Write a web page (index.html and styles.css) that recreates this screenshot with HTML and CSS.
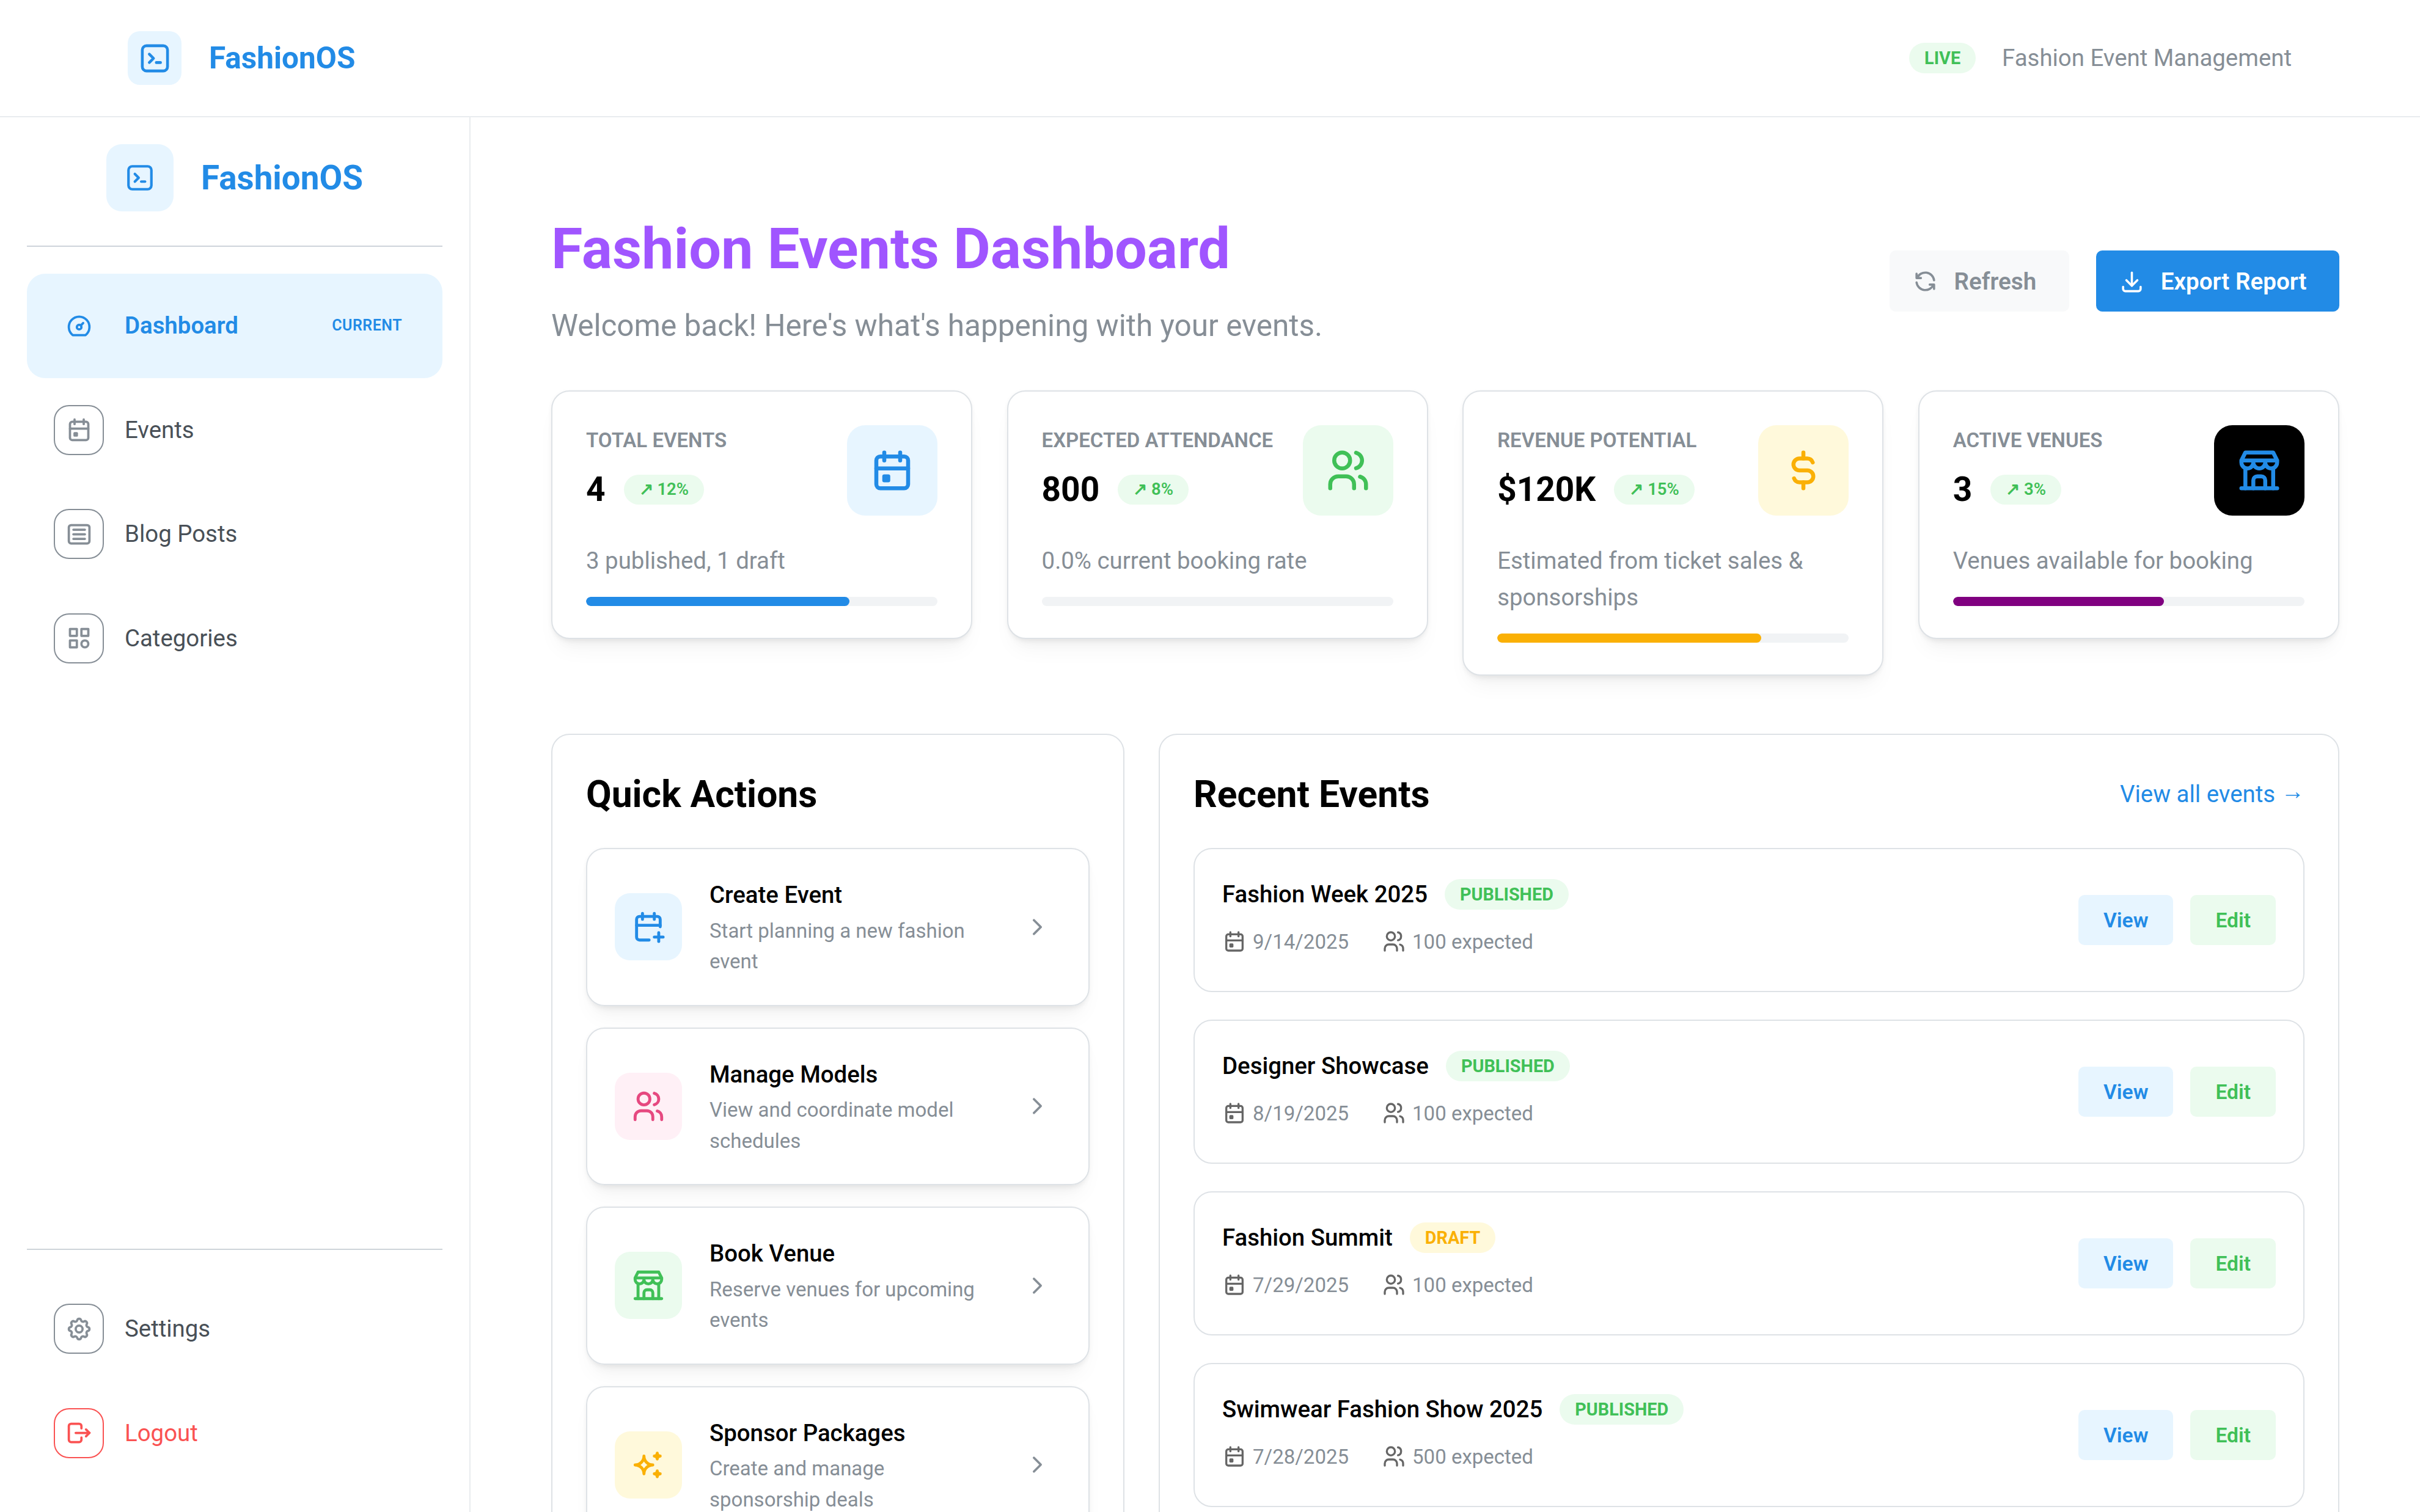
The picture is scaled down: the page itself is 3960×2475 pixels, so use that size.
FILE: index.html
```html
<!DOCTYPE html>
<html lang="en">
<head>
    <meta charset="UTF-8">
    <meta name="viewport" content="width=device-width, initial-scale=1.0">
    <title>FashionOS</title>
    <link rel="stylesheet" href="styles.css">
</head>
<body>
    <!-- icon sprite -->
    <svg class="sprite" xmlns="http://www.w3.org/2000/svg">
        <symbol id="i-terminal" viewBox="0 0 24 24"><rect x="3" y="3" width="18" height="18" rx="3"/><path d="M8 9l3 3l-3 3"/><path d="M13 15h3"/></symbol>
        <symbol id="i-dashboard" viewBox="0 0 24 24"><path d="M12 13m-2 0a2 2 0 1 0 4 0a2 2 0 1 0 -4 0"/><path d="M13.45 11.55l2.05 -2.05"/><path d="M6.4 20a9 9 0 1 1 11.2 0z"/></symbol>
        <symbol id="i-calendar" viewBox="0 0 24 24"><path d="M4 5m0 2a2 2 0 0 1 2 -2h12a2 2 0 0 1 2 2v12a2 2 0 0 1 -2 2h-12a2 2 0 0 1 -2 -2z"/><path d="M16 3v4"/><path d="M8 3v4"/><path d="M4 11h16"/><path d="M8 15h2v2h-2z"/></symbol>
        <symbol id="i-article" viewBox="0 0 24 24"><path d="M3 4m0 2a2 2 0 0 1 2 -2h14a2 2 0 0 1 2 2v12a2 2 0 0 1 -2 2h-14a2 2 0 0 1 -2 -2z"/><path d="M7 8h10"/><path d="M7 12h10"/><path d="M7 16h10"/></symbol>
        <symbol id="i-category" viewBox="0 0 24 24"><path d="M4 4h6v6h-6z"/><path d="M14 4h6v6h-6z"/><path d="M4 14h6v6h-6z"/><path d="M17 17m-3 0a3 3 0 1 0 6 0a3 3 0 1 0 -6 0"/></symbol>
        <symbol id="i-settings" viewBox="0 0 24 24"><path d="M10.325 4.317c.426 -1.756 2.924 -1.756 3.35 0a1.724 1.724 0 0 0 2.573 1.066c1.543 -.94 3.31 .826 2.37 2.37a1.724 1.724 0 0 0 1.065 2.572c1.756 .426 1.756 2.924 0 3.35a1.724 1.724 0 0 0 -1.066 2.573c.94 1.543 -.826 3.31 -2.37 2.37a1.724 1.724 0 0 0 -2.572 1.065c-.426 1.756 -2.924 1.756 -3.35 0a1.724 1.724 0 0 0 -2.573 -1.066c-1.543 .94 -3.31 -.826 -2.37 -2.37a1.724 1.724 0 0 0 -1.065 -2.572c-1.756 -.426 -1.756 -2.924 0 -3.35a1.724 1.724 0 0 0 1.066 -2.573c-.94 -1.543 .826 -3.31 2.37 -2.37c1 .608 2.296 .07 2.572 -1.065z"/><path d="M9 12a3 3 0 1 0 6 0a3 3 0 0 0 -6 0"/></symbol>
        <symbol id="i-logout" viewBox="0 0 24 24"><path d="M14 8v-2a2 2 0 0 0 -2 -2h-7a2 2 0 0 0 -2 2v12a2 2 0 0 0 2 2h7a2 2 0 0 0 2 -2v-2"/><path d="M9 12h12l-3 -3"/><path d="M18 15l3 -3"/></symbol>
        <symbol id="i-users" viewBox="0 0 24 24"><path d="M9 7m-4 0a4 4 0 1 0 8 0a4 4 0 1 0 -8 0"/><path d="M3 21v-2a4 4 0 0 1 4 -4h4a4 4 0 0 1 4 4v2"/><path d="M16 3.13a4 4 0 0 1 0 7.75"/><path d="M21 21v-2a4 4 0 0 0 -3 -3.85"/></symbol>
        <symbol id="i-dollar" viewBox="0 0 24 24"><path d="M16.7 8a3 3 0 0 0 -2.7 -2h-4a3 3 0 0 0 0 6h4a3 3 0 0 1 0 6h-4a3 3 0 0 1 -2.7 -2"/><path d="M12 3v3m0 12v3"/></symbol>
        <symbol id="i-store" viewBox="0 0 24 24"><path d="M3 21h18"/><path d="M3 7v1a3 3 0 0 0 6 0v-1m0 1a3 3 0 0 0 6 0v-1m0 1a3 3 0 0 0 6 0v-1h-18l2 -4h14l2 4"/><path d="M5 21v-10.15"/><path d="M19 21v-10.15"/><path d="M9 21v-4a2 2 0 0 1 2 -2h2a2 2 0 0 1 2 2v4"/></symbol>
        <symbol id="i-calendar-plus" viewBox="0 0 24 24"><path d="M12.5 21h-6.5a2 2 0 0 1 -2 -2v-12a2 2 0 0 1 2 -2h12a2 2 0 0 1 2 2v5"/><path d="M16 3v4"/><path d="M8 3v4"/><path d="M4 11h16"/><path d="M16 19h6"/><path d="M19 16v6"/></symbol>
        <symbol id="i-sparkles" viewBox="0 0 24 24"><path d="M16 18a2 2 0 0 1 2 2a2 2 0 0 1 2 -2a2 2 0 0 1 -2 -2a2 2 0 0 1 -2 2zm0 -12a2 2 0 0 1 2 2a2 2 0 0 1 2 -2a2 2 0 0 1 -2 -2a2 2 0 0 1 -2 2zm-7 12a6 6 0 0 1 6 -6a6 6 0 0 1 -6 -6a6 6 0 0 1 -6 6a6 6 0 0 1 6 6z"/></symbol>
        <symbol id="i-chevron" viewBox="0 0 24 24"><path d="M9 6l6 6l-6 6"/></symbol>
        <symbol id="i-refresh" viewBox="0 0 24 24"><path d="M20 11a8.1 8.1 0 0 0 -15.5 -2m-.5 -4v4h4"/><path d="M4 13a8.1 8.1 0 0 0 15.5 2m.5 4v-4h-4"/></symbol>
        <symbol id="i-download" viewBox="0 0 24 24"><path d="M4 17v2a2 2 0 0 0 2 2h12a2 2 0 0 0 2 -2v-2"/><path d="M7 11l5 5l5 -5"/><path d="M12 4v12"/></symbol>
    </svg>

    <header class="topbar">
        <div class="brand">
            <div class="brand-tile"><svg class="icon icon-55"><use href="#i-terminal"/></svg></div>
            <span class="brand-name">FashionOS</span>
        </div>
        <div class="topbar-right">
            <span class="pill pill-green live">LIVE</span>
            <span class="topbar-text">Fashion Event Management</span>
        </div>
    </header>

    <div class="layout">
        <aside class="sidebar">
            <div class="side-brand">
                <div class="side-tile"><svg class="icon icon-50"><use href="#i-terminal"/></svg></div>
                <span class="side-name">FashionOS</span>
            </div>
            <nav class="nav">
                <a class="nav-item active">
                    <span class="nav-icon"><svg class="icon icon-45"><use href="#i-dashboard"/></svg></span>
                    <span class="nav-label">Dashboard</span>
                    <span class="nav-tag">CURRENT</span>
                </a>
                <a class="nav-item">
                    <span class="nav-icon"><svg class="icon icon-45"><use href="#i-calendar"/></svg></span>
                    <span class="nav-label">Events</span>
                </a>
                <a class="nav-item">
                    <span class="nav-icon"><svg class="icon icon-45"><use href="#i-article"/></svg></span>
                    <span class="nav-label">Blog Posts</span>
                </a>
                <a class="nav-item">
                    <span class="nav-icon"><svg class="icon icon-45"><use href="#i-category"/></svg></span>
                    <span class="nav-label">Categories</span>
                </a>
            </nav>
            <div class="nav-bottom">
                <a class="nav-item">
                    <span class="nav-icon"><svg class="icon icon-45"><use href="#i-settings"/></svg></span>
                    <span class="nav-label">Settings</span>
                </a>
                <a class="nav-item logout">
                    <span class="nav-icon"><svg class="icon icon-45"><use href="#i-logout"/></svg></span>
                    <span class="nav-label">Logout</span>
                </a>
            </div>
        </aside>

        <main class="main">
            <section class="page-head">
                <div>
                    <h1 class="page-title">Fashion Events Dashboard</h1>
                    <p class="page-sub">Welcome back! Here's what's happening with your events.</p>
                </div>
                <div class="head-actions">
                    <button class="btn btn-light"><svg class="icon icon-43"><use href="#i-refresh"/></svg>Refresh</button>
                    <button class="btn btn-blue"><svg class="icon icon-43"><use href="#i-download"/></svg>Export Report</button>
                </div>
            </section>

            <section class="stats">
                <div class="stat-card">
                    <div class="stat-top">
                        <div>
                            <div class="stat-label">TOTAL EVENTS</div>
                            <div class="stat-row"><span class="stat-value">4</span><span class="trend">↗ 12%</span></div>
                        </div>
                        <div class="stat-tile tint-blue"><svg class="icon icon-78"><use href="#i-calendar"/></svg></div>
                    </div>
                    <p class="stat-desc">3 published, 1 draft</p>
                    <div class="bar"><div class="bar-fill fill-blue" style="width: 75%"></div></div>
                </div>
                <div class="stat-card">
                    <div class="stat-top">
                        <div>
                            <div class="stat-label">EXPECTED ATTENDANCE</div>
                            <div class="stat-row"><span class="stat-value">800</span><span class="trend">↗ 8%</span></div>
                        </div>
                        <div class="stat-tile tint-green"><svg class="icon icon-78"><use href="#i-users"/></svg></div>
                    </div>
                    <p class="stat-desc">0.0% current booking rate</p>
                    <div class="bar"><div class="bar-fill fill-green" style="width: 0%"></div></div>
                </div>
                <div class="stat-card">
                    <div class="stat-top">
                        <div>
                            <div class="stat-label">REVENUE POTENTIAL</div>
                            <div class="stat-row"><span class="stat-value">$120K</span><span class="trend">↗ 15%</span></div>
                        </div>
                        <div class="stat-tile tint-yellow"><svg class="icon icon-78"><use href="#i-dollar"/></svg></div>
                    </div>
                    <p class="stat-desc">Estimated from ticket sales &amp; sponsorships</p>
                    <div class="bar"><div class="bar-fill fill-yellow" style="width: 75%"></div></div>
                </div>
                <div class="stat-card">
                    <div class="stat-top">
                        <div>
                            <div class="stat-label">ACTIVE VENUES</div>
                            <div class="stat-row"><span class="stat-value">3</span><span class="trend">↗ 3%</span></div>
                        </div>
                        <div class="stat-tile tint-black"><svg class="icon icon-78"><use href="#i-store"/></svg></div>
                    </div>
                    <p class="stat-desc">Venues available for booking</p>
                    <div class="bar"><div class="bar-fill fill-purple" style="width: 60%"></div></div>
                </div>
            </section>

            <section class="panels">
                <div class="panel">
                    <h2 class="panel-title">Quick Actions</h2>
                    <div class="action-list">
                        <div class="action-card">
                            <div class="action-tile tint-blue"><svg class="icon icon-58"><use href="#i-calendar-plus"/></svg></div>
                            <div class="action-text">
                                <div class="action-name">Create Event</div>
                                <div class="action-desc">Start planning a new fashion event</div>
                            </div>
                            <svg class="icon icon-45 chevron"><use href="#i-chevron"/></svg>
                        </div>
                        <div class="action-card">
                            <div class="action-tile tint-pink"><svg class="icon icon-58"><use href="#i-users"/></svg></div>
                            <div class="action-text">
                                <div class="action-name">Manage Models</div>
                                <div class="action-desc">View and coordinate model schedules</div>
                            </div>
                            <svg class="icon icon-45 chevron"><use href="#i-chevron"/></svg>
                        </div>
                        <div class="action-card">
                            <div class="action-tile tint-green"><svg class="icon icon-58"><use href="#i-store"/></svg></div>
                            <div class="action-text">
                                <div class="action-name">Book Venue</div>
                                <div class="action-desc">Reserve venues for upcoming events</div>
                            </div>
                            <svg class="icon icon-45 chevron"><use href="#i-chevron"/></svg>
                        </div>
                        <div class="action-card">
                            <div class="action-tile tint-yellow"><svg class="icon icon-58"><use href="#i-sparkles"/></svg></div>
                            <div class="action-text">
                                <div class="action-name">Sponsor Packages</div>
                                <div class="action-desc">Create and manage sponsorship deals</div>
                            </div>
                            <svg class="icon icon-45 chevron"><use href="#i-chevron"/></svg>
                        </div>
                    </div>
                </div>

                <div class="panel">
                    <div class="panel-head">
                        <h2 class="panel-title">Recent Events</h2>
                        <a class="view-all">View all events <span class="arrow">→</span></a>
                    </div>
                    <div class="event-list">
                        <div class="event-card">
                            <div>
                                <div class="event-title"><span class="event-name">Fashion Week 2025</span><span class="pill pill-green">PUBLISHED</span></div>
                                <div class="event-meta">
                                    <span class="meta-item"><svg class="icon icon-40"><use href="#i-calendar"/></svg>9/14/2025</span>
                                    <span class="meta-item"><svg class="icon icon-40"><use href="#i-users"/></svg>100 expected</span>
                                </div>
                            </div>
                            <div class="event-actions"><button class="mini mini-blue">View</button><button class="mini mini-green">Edit</button></div>
                        </div>
                        <div class="event-card">
                            <div>
                                <div class="event-title"><span class="event-name">Designer Showcase</span><span class="pill pill-green">PUBLISHED</span></div>
                                <div class="event-meta">
                                    <span class="meta-item"><svg class="icon icon-40"><use href="#i-calendar"/></svg>8/19/2025</span>
                                    <span class="meta-item"><svg class="icon icon-40"><use href="#i-users"/></svg>100 expected</span>
                                </div>
                            </div>
                            <div class="event-actions"><button class="mini mini-blue">View</button><button class="mini mini-green">Edit</button></div>
                        </div>
                        <div class="event-card">
                            <div>
                                <div class="event-title"><span class="event-name">Fashion Summit</span><span class="pill pill-yellow">DRAFT</span></div>
                                <div class="event-meta">
                                    <span class="meta-item"><svg class="icon icon-40"><use href="#i-calendar"/></svg>7/29/2025</span>
                                    <span class="meta-item"><svg class="icon icon-40"><use href="#i-users"/></svg>100 expected</span>
                                </div>
                            </div>
                            <div class="event-actions"><button class="mini mini-blue">View</button><button class="mini mini-green">Edit</button></div>
                        </div>
                        <div class="event-card">
                            <div>
                                <div class="event-title"><span class="event-name">Swimwear Fashion Show 2025</span><span class="pill pill-green">PUBLISHED</span></div>
                                <div class="event-meta">
                                    <span class="meta-item"><svg class="icon icon-40"><use href="#i-calendar"/></svg>7/28/2025</span>
                                    <span class="meta-item"><svg class="icon icon-40"><use href="#i-users"/></svg>500 expected</span>
                                </div>
                            </div>
                            <div class="event-actions"><button class="mini mini-blue">View</button><button class="mini mini-green">Edit</button></div>
                        </div>
                    </div>
                </div>
            </section>
        </main>
    </div>
</body>
</html>
```

FILE: styles.css
```css
* {
    box-sizing: border-box;
}

html, body {
    margin: 0;
    height: 100%;
}

body {
    font-family: 'Roboto', sans-serif;
    font-size: 38.4px;
    line-height: 1.55;
    color: #000;
    background-color: #fff;
    display: flex;
    flex-direction: column;
    overflow: hidden;
}

h1, h2, p {
    margin: 0;
}

button {
    font-family: inherit;
    border: none;
    cursor: pointer;
}

.sprite {
    display: none;
}

.icon {
    fill: none;
    stroke: currentColor;
    stroke-width: 2;
    stroke-linecap: round;
    stroke-linejoin: round;
    flex-shrink: 0;
}

.icon-40 { width: 40px; height: 40px; }
.icon-43 { width: 43px; height: 43px; }
.icon-45 { width: 45px; height: 45px; }
.icon-50 { width: 50px; height: 50px; }
.icon-55 { width: 55px; height: 55px; }
.icon-58 { width: 58px; height: 58px; }
.icon-78 { width: 78px; height: 78px; }

/* Top bar */
.topbar {
    height: 192px;
    flex-shrink: 0;
    display: flex;
    align-items: center;
    justify-content: space-between;
    padding: 0 210px 0 209px;
    border-bottom: 2.5px solid #e9ecef;
}

.brand {
    display: flex;
    align-items: center;
    gap: 45px;
}

.brand-tile {
    width: 88px;
    height: 88px;
    border-radius: 20px;
    background-color: #e7f5ff;
    color: #228be6;
    display: flex;
    align-items: center;
    justify-content: center;
}

.brand-name {
    font-size: 49.5px;
    font-weight: 700;
    color: #228be6;
}

.topbar-right {
    display: flex;
    align-items: center;
    gap: 43px;
}

.topbar-text {
    color: #868e96;
}

.pill {
    height: 50px;
    padding: 0 25px;
    border-radius: 25px;
    font-size: 28.8px;
    font-weight: 700;
    display: inline-flex;
    align-items: center;
}

.pill-green { background-color: #ebfbee; color: #40c057; }
.pill-yellow { background-color: #fff9db; color: #fab005; }

/* Sidebar */
.layout {
    flex: 1;
    min-height: 0;
    display: flex;
}

.sidebar {
    width: 770px;
    flex-shrink: 0;
    padding: 44px 44px 44px;
    border-right: 2.5px solid #e9ecef;
    display: flex;
    flex-direction: column;
}

.side-brand {
    display: flex;
    align-items: center;
    padding: 0 0 56px 130px;
    gap: 45px;
    border-bottom: 2.5px solid #ced4da;
    margin-bottom: 44px;
}

.side-tile {
    width: 110px;
    height: 110px;
    border-radius: 25px;
    background-color: #e7f5ff;
    color: #228be6;
    display: flex;
    align-items: center;
    justify-content: center;
}

.side-name {
    font-size: 54.8px;
    font-weight: 700;
    color: #228be6;
}

.nav {
    flex: 1;
}

.nav-bottom {
    border-top: 2.5px solid #ced4da;
    padding-top: 44px;
}

.nav-item {
    height: 170.5px;
    padding: 0 44px;
    border-radius: 30px;
    display: flex;
    align-items: center;
    gap: 34px;
    color: #495057;
}

.nav-icon {
    width: 82px;
    height: 82px;
    border: 2.5px solid #868e96;
    border-radius: 25px;
    color: #868e96;
    display: flex;
    align-items: center;
    justify-content: center;
}

.nav-label {
    flex: 1;
}

.nav-tag {
    font-size: 25px;
    font-weight: 600;
    letter-spacing: 0.5px;
    margin-right: 22px;
}

.nav-item.active {
    background-color: #e7f5ff;
    color: #228be6;
    font-weight: 600;
}

.nav-item.active .nav-icon {
    border: none;
    color: #228be6;
}

.nav-item.logout {
    color: #fa5252;
}

.nav-item.logout .nav-icon {
    border-color: #fa5252;
    color: #fa5252;
}

/* Main */
.main {
    flex: 1;
    min-width: 0;
    padding: 150px 132px 0;
    overflow: hidden;
}

.page-head {
    display: flex;
    justify-content: space-between;
    align-items: flex-start;
    margin-bottom: 71px;
}

.page-title {
    font-size: 93.6px;
    font-weight: 700;
    line-height: 130px;
    color: #a055ff;
}

.page-sub {
    font-size: 49.5px;
    line-height: 70px;
    margin-top: 26px;
    color: #868e96;
}

.head-actions {
    display: flex;
    gap: 44px;
    margin-top: 68px;
}

.btn {
    height: 100px;
    padding: 0 53.5px 0 37px;
    border-radius: 10px;
    font-size: 38.6px;
    font-weight: 600;
    display: flex;
    align-items: center;
    gap: 26px;
}

.btn-light { background-color: #f8f9fa; color: #868e96; }
.btn-blue { background-color: #228be6; color: #fff; }

/* Stat cards */
.stats {
    display: grid;
    grid-template-columns: repeat(4, 1fr);
    gap: 56.25px;
    align-items: start;
    margin-bottom: 95px;
}

.stat-card {
    padding: 55px 55px 52px;
    border: 2.5px solid #dee2e6;
    border-radius: 30px;
    background-color: #fff;
    box-shadow: 0 2.5px 7.5px rgba(0, 0, 0, 0.05), 0 25px 37.5px -12.5px rgba(0, 0, 0, 0.05), 0 17.5px 17.5px -12.5px rgba(0, 0, 0, 0.04);
}

.stat-top {
    display: flex;
    justify-content: space-between;
    align-items: flex-start;
    margin-bottom: 44px;
}

.stat-label {
    font-size: 33px;
    font-weight: 600;
    line-height: 50px;
    color: #868e96;
}

.stat-row {
    display: flex;
    align-items: center;
    gap: 30px;
    margin-top: 13px;
}

.stat-value {
    font-size: 55px;
    font-weight: 700;
    line-height: 85px;
}

.trend {
    height: 49px;
    padding: 0 25px;
    border-radius: 25px;
    font-size: 27.5px;
    font-weight: 600;
    background-color: #ebfbee;
    color: #40c057;
    display: inline-flex;
    align-items: center;
}

.stat-tile {
    width: 148px;
    height: 148px;
    border-radius: 30px;
    display: flex;
    align-items: center;
    justify-content: center;
    flex-shrink: 0;
}

.tint-blue { background-color: #e7f5ff; color: #228be6; }
.tint-green { background-color: #ebfbee; color: #40c057; }
.tint-yellow { background-color: #fff9db; color: #fab005; }
.tint-pink { background-color: #fff0f6; color: #e64980; }
.tint-black { background-color: #000; color: #228be6; }

.stat-desc {
    line-height: 60px;
    color: #868e96;
    margin-bottom: 29px;
}

.bar {
    height: 15px;
    border-radius: 7.5px;
    background-color: #f1f3f5;
    overflow: hidden;
}

.bar-fill {
    height: 100%;
    border-radius: 7.5px;
}

.fill-blue { background-color: #228be6; }
.fill-green { background-color: #40c057; }
.fill-yellow { background-color: #fab005; }
.fill-purple { background-color: #800080; }

/* Panels */
.panels {
    display: grid;
    grid-template-columns: 938px 1fr;
    gap: 56px;
    align-items: start;
}

.panel {
    padding: 55px;
    border: 2.5px solid #dee2e6;
    border-radius: 30px;
}

.panel-head {
    display: flex;
    justify-content: space-between;
    align-items: center;
}

.panel-title {
    font-size: 60.5px;
    font-weight: 700;
    line-height: 80px;
    padding-top: 3px;
}

.view-all {
    color: #228be6;
}

.arrow {
    display: inline-block;
    transform: translateY(-5px);
}

.action-list {
    display: flex;
    flex-direction: column;
    gap: 35px;
    margin-top: 47px;
}

.action-card {
    padding: 45px;
    border: 2.5px solid #dee2e6;
    border-radius: 30px;
    display: flex;
    align-items: center;
    gap: 45px;
    box-shadow: 0 2.5px 7.5px rgba(0, 0, 0, 0.05), 0 25px 37.5px -12.5px rgba(0, 0, 0, 0.05), 0 17.5px 17.5px -12.5px rgba(0, 0, 0, 0.04);
}

.action-tile {
    width: 110px;
    height: 110px;
    border-radius: 25px;
    display: flex;
    align-items: center;
    justify-content: center;
    flex-shrink: 0;
}

.action-text {
    flex: 1;
}

.action-name {
    font-weight: 500;
}

.action-desc {
    font-size: 33px;
    line-height: 50.5px;
    margin-top: 4px;
    color: #868e96;
}

.chevron {
    color: #868e96;
    margin-right: 16.5px;
}

.event-list {
    display: flex;
    flex-direction: column;
    gap: 45px;
    margin-top: 47px;
}

.event-card {
    height: 236px;
    padding: 0 45px;
    border: 2.5px solid #dee2e6;
    border-radius: 30px;
    display: flex;
    justify-content: space-between;
    align-items: center;
}

.event-title {
    display: flex;
    align-items: center;
    gap: 28px;
}

.event-name {
    font-weight: 500;
}

.event-meta {
    display: flex;
    gap: 54px;
    margin-top: 22px;
    font-size: 33px;
    color: #868e96;
    padding-bottom: 11px;
}

.meta-item {
    display: flex;
    align-items: center;
    gap: 10px;
}

.meta-item .icon {
    color: #666;
}

.event-actions {
    display: flex;
    gap: 28px;
}

.mini {
    height: 82px;
    padding: 0 41px;
    border-radius: 10px;
    font-size: 33.6px;
    font-weight: 600;
}

.mini-blue { background-color: #e7f5ff; color: #228be6; }
.mini-green { background-color: #ebfbee; color: #40c057; }
```
